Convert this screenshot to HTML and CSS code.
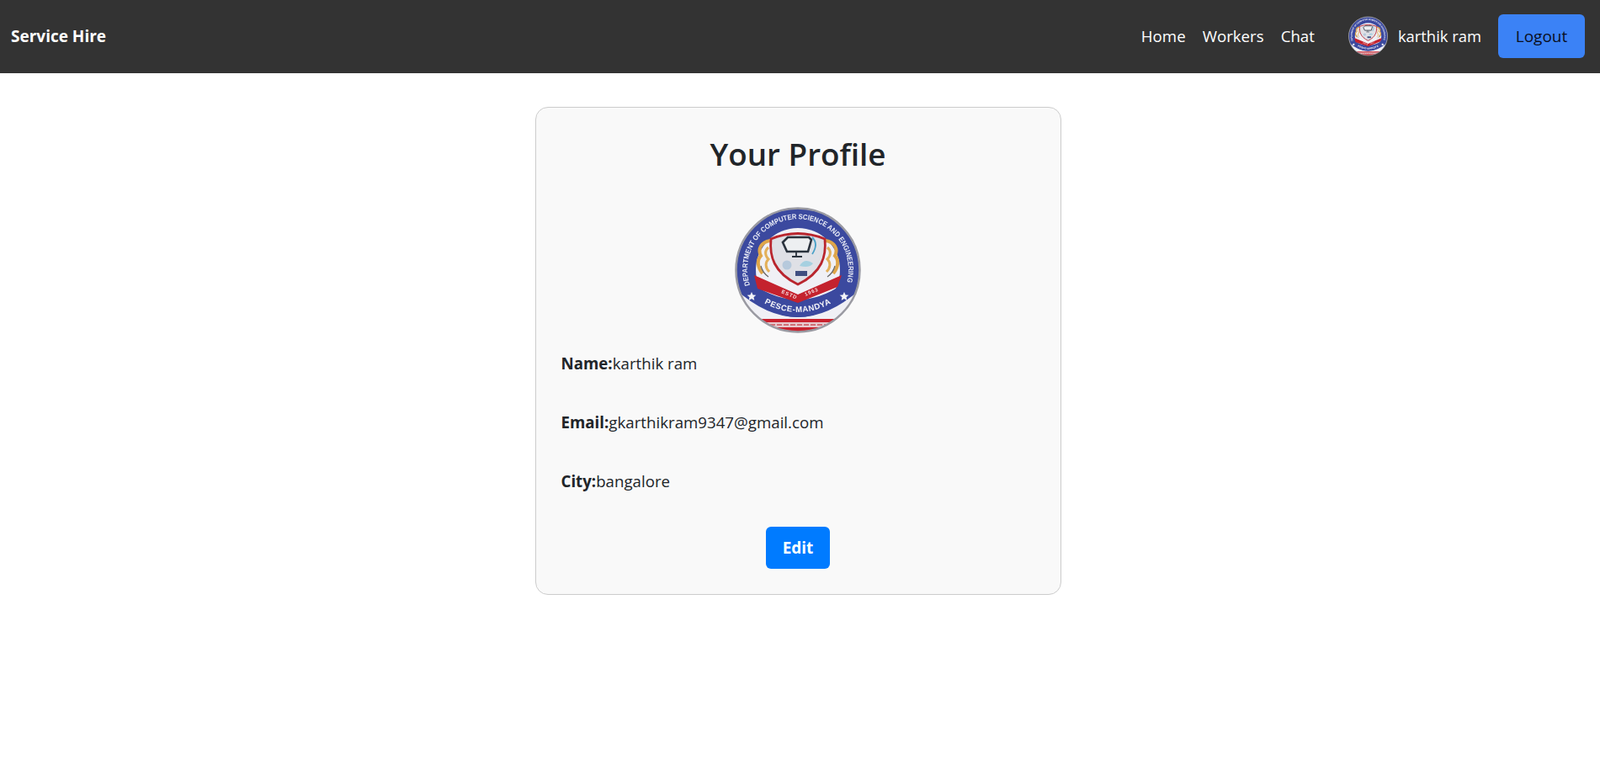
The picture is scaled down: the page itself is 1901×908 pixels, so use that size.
FILE: index.html
```html
<!DOCTYPE html>
<html lang="en">
<head>
<meta charset="utf-8">
<title>Your Profile</title>
<link rel="stylesheet" href="styles.css">
</head>
<body>
<svg class="defs" width="0" height="0" aria-hidden="true">
  <defs>
    <filter id="soft" x="-5%" y="-5%" width="110%" height="110%"><feGaussianBlur stdDeviation="0.7"/></filter>
    <clipPath id="disc"><circle cx="75" cy="75" r="73.5"/></clipPath>
    <path id="topArc" d="M18 93 A60 60 0 1 1 132 93"/>
    <path id="botArc" d="M28 110 Q75 140 122 110"/>
    <symbol id="emblem" viewBox="0 0 150 150">
      <g clip-path="url(#disc)" filter="url(#soft)">
        <rect width="150" height="150" fill="#eef0f6"/>
        <circle cx="75" cy="75" r="73" fill="#3b4a9f"/>
        <circle cx="75" cy="75" r="50" fill="#f0f0f5"/>
        <path d="M0 97 Q75 165 150 97 V150 H0Z" fill="#f0f0f5"/>
        <path d="M22 92 Q75 128 128 92 L141 98 Q75 164 9 98Z" fill="#3b4a9f"/>
        <path d="M31 133 H119 L126 150 H24Z" fill="#c9242e"/>
        <rect x="38" y="137" width="74" height="6" fill="#e7c9ce"/>
        <path d="M42 140 H108" stroke="#c9545c" stroke-width="1.6" stroke-dasharray="6 2"/>
        <path d="M42 40 C31 42 27 50 31 58 C26 63 27 72 33 79" fill="none" stroke="#dfa64a" stroke-width="4"/>
        <path d="M40 48 C35 52 36 58 40 62 C36 66 36 72 41 77" fill="none" stroke="#e3b05a" stroke-width="3"/>
        <path d="M108 40 C119 42 123 50 119 58 C124 63 123 72 117 79" fill="none" stroke="#dfa64a" stroke-width="4"/>
        <path d="M110 48 C115 52 114 58 110 62 C114 66 114 72 109 77" fill="none" stroke="#e3b05a" stroke-width="3"/>
        <path d="M43 38 Q75 25 107 38 C109 58 104 78 75 92 C46 78 41 58 43 38Z" fill="#dfe0e6" stroke="#b9252f" stroke-width="2.8"/>
        <path d="M57 42 L63 36 H88 L91 39 L87 53 H62Z" fill="#edeff1" stroke="#2a323d" stroke-width="2.6"/>
        <path d="M92 36 Q100 44 92 56" fill="none" stroke="#4aa0c8" stroke-width="1.8"/>
        <path d="M73 54 V58 M68 59 H80" stroke="#2a323d" stroke-width="1.8"/>
        <circle cx="62" cy="69" r="5.5" fill="#b6c9dc"/>
        <path d="M77 70 Q83 60 93 67 Q89 73 77 70Z" fill="#a6d0e0"/>
        <rect x="72" y="76" width="14" height="6" fill="#3f4f80"/>
        <path d="M23 81 L75 104 L127 81 L122 95 L75 114 L27 97Z" fill="#c4202d"/>
        <path d="M31 70 Q33 78 40 83 M119 70 Q117 78 110 83" fill="none" stroke="#666" stroke-width="1.2"/>
        <text class="estd" x="55" y="102" transform="rotate(23 55 102)">ESTD</text>
        <text class="estd" x="84" y="106" transform="rotate(-23 84 106)">1963</text>
        <text class="ring-text"><textPath href="#topArc" startOffset="0" textLength="222" lengthAdjust="spacingAndGlyphs">DEPARTMENT OF COMPUTER SCIENCE AND ENGINEERING</textPath></text>
        <text class="mandya"><textPath href="#botArc" startOffset="50%">PESCE-MANDYA</textPath></text>
        <path d="M20 101 l1.6 3.4 3.7.4-2.8 2.5.8 3.7-3.3-1.9-3.3 1.9.8-3.7-2.8-2.5 3.7-.4Z" fill="#f4f4f8"/>
        <path d="M130 101 l1.6 3.4 3.7.4-2.8 2.5.8 3.7-3.3-1.9-3.3 1.9.8-3.7-2.8-2.5 3.7-.4Z" fill="#f4f4f8"/>
      </g>
      <circle cx="75" cy="75" r="73.5" fill="none" stroke="#9a9aa2" stroke-width="2.5" filter="url(#soft)"/>
    </symbol>
  </defs>
</svg>

<nav class="navbar">
  <a class="brand" href="#">Service Hire</a>
  <div class="nav-right">
    <ul class="nav-links">
      <li><a href="#">Home</a></li>
      <li><a href="#">Workers</a></li>
      <li><a href="#">Chat</a></li>
    </ul>
    <div class="user">
      <svg class="avatar"><use href="#emblem"/></svg>
      <span class="user-name">karthik ram</span>
    </div>
    <button class="logout" type="button">Logout</button>
  </div>
</nav>

<main class="page">
  <section class="card">
    <h1 class="title">Your Profile</h1>
    <svg class="photo"><use href="#emblem"/></svg>
    <p class="field"><strong>Name:</strong>karthik ram</p>
    <p class="field"><strong>Email:</strong>gkarthikram9347@gmail.com</p>
    <p class="field"><strong>City:</strong>bangalore</p>
    <div class="actions"><button class="edit" type="button">Edit</button></div>
  </section>
</main>
</body>
</html>
```

FILE: styles.css
```css
* { box-sizing: border-box; }

html, body { height: 100%; }

body {
  margin: 0;
  background: #fff;
  color: #212529;
  font-family: "Open Sans", "Noto Sans", sans-serif;
  font-size: 18px;
  overflow: hidden;
}

.defs { display: block; height: 0; }

.navbar {
  display: flex;
  align-items: center;
  justify-content: space-between;
  height: 87px;
  padding: 0 18px 2px 13px;
  background: #333;
  color: #fff;
}

.brand {
  color: #fff;
  font-size: 19px;
  font-weight: 700;
  text-decoration: none;
}

.nav-right { display: flex; align-items: center; }

.nav-links {
  display: flex;
  gap: 20px;
  margin: 0 40px 0 0;
  padding: 0;
  list-style: none;
}

.nav-links a {
  color: #fff;
  font-size: 18.7px;
  text-decoration: none;
}

.user { display: flex; align-items: center; gap: 12px; margin-right: 20px; }

.avatar { display: block; width: 47px; height: 50px; }

.user-name { font-size: 18.4px; }

.logout {
  width: 103px;
  height: 52px;
  border: 0;
  border-radius: 6px;
  background: #3b82f6;
  color: #0a0f1e;
  font: inherit;
  font-size: 19px;
}

.page { display: flex; justify-content: center; padding: 40px 5px 0 0; }

.card {
  width: 625px;
  height: 580px;
  padding: 26px 30px 0;
  border: 1px solid #ccc;
  border-radius: 15px;
  background: #f9f9f9;
}

.title {
  margin: 0 0 34px;
  font-size: 36.8px;
  font-weight: 600;
  line-height: 58px;
  text-align: center;
}

.photo { display: block; width: 150px; height: 150px; margin: 0 auto 23px; }

.field { margin: 0 0 44px; font-size: 18.7px; line-height: 26px; }

.actions { display: flex; justify-content: center; margin-top: -3px; }

.edit {
  width: 76px;
  height: 50px;
  border: 0;
  border-radius: 6px;
  background: #007bff;
  color: #fff;
  font: inherit;
  font-size: 19px;
  font-weight: 700;
}

.ring-text { fill: #e9ebf6; font-family: "Liberation Sans", sans-serif; font-size: 8.6px; font-weight: 700; }

.mandya { fill: #f4f4f8; font-family: "Liberation Sans", sans-serif; font-size: 9.5px; font-weight: 700; letter-spacing: .6px; text-anchor: middle; }

.estd { fill: #f3dcdc; font-family: "Liberation Sans", sans-serif; font-size: 6px; font-weight: 700; letter-spacing: 1px; }
```
